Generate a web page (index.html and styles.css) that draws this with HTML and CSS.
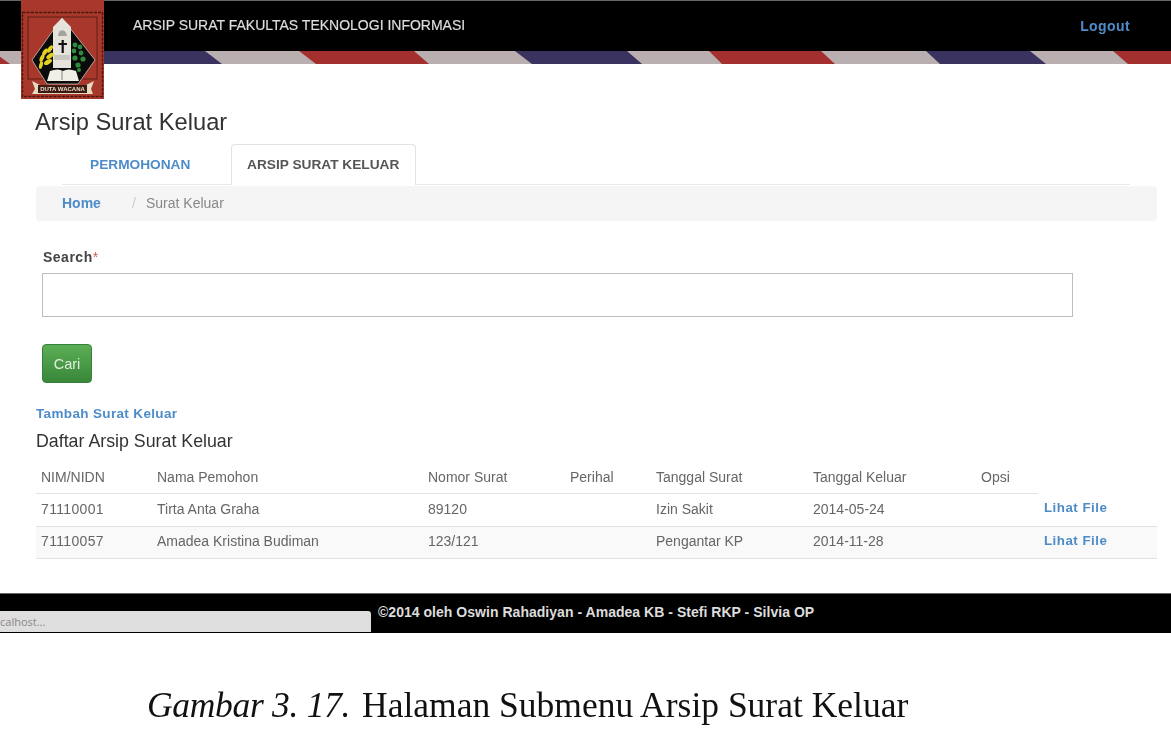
FILE: index.html
```html
<!DOCTYPE html>
<html lang="id">
<head>
<meta charset="utf-8">
<title>Arsip Surat Keluar</title>
<link rel="stylesheet" href="styles.css">
</head>
<body>
<div class="shot">
  <header class="masthead">
    <div class="topbar">
      <span class="brand">ARSIP SURAT FAKULTAS TEKNOLOGI INFORMASI</span>
      <a class="logout">Logout</a>
    </div>
    <svg class="stripes" viewBox="0 0 1171 13" preserveAspectRatio="none" aria-hidden="true">
      <rect width="1171" height="13" fill="#b9aeb0"/>
      <polygon points="-20,0 -8,0 10,13 -2,13" fill="#a3302e"/>
      <polygon points="90,0 205,0 222,13 104,13" fill="#3a3360"/>
      <polygon points="299,0 414,0 429,13 316,13" fill="#a3302e"/>
      <polygon points="515,0 627,0 642,13 532,13" fill="#3a3360"/>
      <polygon points="709,0 821,0 835,13 722,13" fill="#a3302e"/>
      <polygon points="926,0 1030,0 1046,13 940,13" fill="#3a3360"/>
      <polygon points="1113,0 1171,0 1171,13 1128,13" fill="#a3302e"/>
    </svg>
    <svg class="logo" viewBox="0 0 83 99" aria-label="Logo Duta Wacana">
      <rect width="83" height="99" fill="#a8382b"/>
      <rect x="1.5" y="12.5" width="80" height="84" fill="none" stroke="#4a1610" stroke-width="1.3" stroke-dasharray="3 1.2"/>
      <rect x="7" y="17" width="69" height="62" fill="none" stroke="#5a1d14" stroke-width=".9"/>
      <polygon points="41,18 74,60 57,84 26,84 11,60" fill="#0b0b0b" stroke="#d8d4cc" stroke-width=".7"/>
      <polygon points="41,18 50,27 50,68 32,68 32,27" fill="#e6e3dc"/>
      <path d="M37 36q1-6 3-5 1-2 3 0 2 0 3 5z" fill="#a3a3a0"/>
      <rect x="40.6" y="40" width="2.2" height="13" fill="#111"/>
      <rect x="37.5" y="43" width="8.4" height="2" fill="#111"/>
      <path d="M33 55h16v5H33z" fill="#c9c7c1"/>
      <path d="M18 70q2-16 13-27" fill="none" stroke="#1a1a0a" stroke-width=".8"/>
      <g fill="#e2d11f">
        <ellipse cx="29" cy="49" rx="2" ry="4.2" transform="rotate(35 29 49)"/>
        <ellipse cx="24" cy="52" rx="2" ry="4" transform="rotate(35 24 52)"/>
        <ellipse cx="29" cy="56" rx="2.2" ry="4.2" transform="rotate(55 29 56)"/>
        <ellipse cx="21" cy="58" rx="2" ry="4" transform="rotate(25 21 58)"/>
        <ellipse cx="27" cy="62" rx="2.2" ry="4.4" transform="rotate(60 27 62)"/>
        <ellipse cx="20" cy="65" rx="1.8" ry="4" transform="rotate(15 20 65)"/>
      </g>
      <g fill="#2e8a3d">
        <circle cx="54" cy="45" r="2.4"/><circle cx="59" cy="47" r="2.4"/><circle cx="53" cy="51" r="2.4"/>
        <circle cx="60" cy="53" r="2.4"/><circle cx="54" cy="58" r="2.6"/><circle cx="62" cy="59" r="2.6"/>
        <circle cx="57" cy="65" r="2.6"/><circle cx="58" cy="70" r="2"/>
      </g>
      <path d="M26 81l3-10q8-3 13 0q5-3 13 0l3 10z" fill="#f1eee7"/>
      <path d="M41 71v9" stroke="#555" stroke-width=".7"/>
      <path d="M11 81l8 4h46l8-4-3 8 2 5H11l3-5z" fill="#e5dcc0"/>
      <path d="M17 85h49v8H17z" fill="#3d1a12"/>
      <text x="41.5" y="91.4" class="logo-text" text-anchor="middle">DUTA WACANA</text>
    </svg>
  </header>

  <main class="content">
    <h1 class="page-title">Arsip Surat Keluar</h1>
    <nav class="tabs">
      <a class="tab">PERMOHONAN</a>
      <a class="tab tab-active">ARSIP SURAT KELUAR</a>
    </nav>
    <div class="crumbs">
      <a class="crumb-home">Home</a>
      <span class="crumb-sep">/</span>
      <span class="crumb-here">Surat Keluar</span>
    </div>
    <form class="search">
      <label class="search-label">Search<span class="req">*</span></label>
      <input class="search-input" type="text">
      <button class="btn-cari" type="button">Cari</button>
    </form>
    <a class="add-link">Tambah Surat Keluar</a>
    <h2 class="list-title">Daftar Arsip Surat Keluar</h2>
    <table class="grid">
      <thead>
        <tr>
          <th class="c-nim">NIM/NIDN</th>
          <th class="c-nama">Nama Pemohon</th>
          <th class="c-nomor">Nomor Surat</th>
          <th class="c-perihal">Perihal</th>
          <th class="c-tgl">Tanggal Surat</th>
          <th class="c-keluar">Tanggal Keluar</th>
          <th class="c-opsi">Opsi</th>
          <th class="c-file-head"></th>
        </tr>
      </thead>
      <tbody>
        <tr>
          <td class="num">71110001</td><td>Tirta Anta Graha</td><td>89120</td><td></td><td>Izin Sakit</td><td>2014-05-24</td><td></td><td><a class="file-link">Lihat File</a></td>
        </tr>
        <tr class="alt">
          <td class="num">71110057</td><td>Amadea Kristina Budiman</td><td>123/121</td><td></td><td>Pengantar KP</td><td>2014-11-28</td><td></td><td><a class="file-link">Lihat File</a></td>
        </tr>
      </tbody>
    </table>
  </main>

  <footer class="foot">
    <span class="status">calhost...</span>
    <span class="credit">©2014 oleh Oswin Rahadiyan - Amadea KB - Stefi RKP - Silvia OP</span>
  </footer>

  <p class="caption"><em class="caption-lead">Gambar 3. 17.</em> Halaman Submenu Arsip Surat Keluar</p>
</div>
</body>
</html>
```
FILE: styles.css
```css
* { box-sizing: border-box; }
html, body { margin: 0; padding: 0; background: #fff; }
body { font-family: "Liberation Sans", Arial, sans-serif; color: #555; overflow: hidden; }
.shot { width: 1171px; height: 748px; overflow: hidden; filter: blur(0.45px); }

.masthead { position: relative; }
.topbar { height: 51px; background: #000; border-top: 1px solid #666; display: flex; justify-content: space-between; padding: 17px 41px 0 133px; }
.brand { color: #ddd; font-size: 14px; line-height: 15px; -webkit-text-stroke: .2px #ddd; }
.logout { color: #4d8cc9; font-size: 14px; font-weight: 700; line-height: 16px; letter-spacing: .4px; }
.stripes { display: block; width: 100%; height: 13px; }
.logo { position: absolute; left: 21px; top: 0; width: 83px; height: 99px; }
.logo-text { font-family: "Liberation Sans", Arial, sans-serif; font-size: 6px; font-weight: 700; fill: #e8e0c8; }

.content { padding: 45px 14px 0 36px; height: 529px; }
.page-title { margin: 0 0 0 -1px; font-size: 23.7px; line-height: 27px; font-weight: 400; color: #333; }
.tabs { display: flex; margin: 8px 27px 0 26px; height: 41px; border-bottom: 1px solid #e8e8e8; font-size: 13.7px; font-weight: 700; }
.tab { padding: 13px 16px 0 28px; color: #4d8cc9; width: 169px; line-height: 16px; }
.tab-active { width: 185px; height: 41px; padding: 12px 0 0 15px; color: #555; background: #fff; border: 1px solid #e3e3e3; border-bottom: 0; border-radius: 4px 4px 0 0; }
.crumbs { height: 35px; margin-top: 1px; background: #f5f5f5; border-radius: 4px; display: flex; align-items: center; padding: 0 0 2px 26px; font-size: 14px; }
.crumb-home { color: #4d8cc9; font-weight: 700; width: 70px; }
.crumb-sep { color: #ccc; width: 14px; }
.crumb-here { color: #888; }

.search { display: flex; flex-direction: column; align-items: flex-start; }
.search-label { margin: 28px 0 0 7px; font-size: 14px; font-weight: 700; line-height: 16px; color: #444; letter-spacing: .5px; }
.req { color: #c9604f; font-weight: 400; }
.search-input { width: 1031px; height: 44px; margin: 8px 0 0 6px; border: 1px solid #bdbdbd; background: #fff; }
.btn-cari { width: 50px; height: 39px; margin: 27px 0 0 6px; padding: 0; color: #dfeedd; font: 400 14.5px "Liberation Sans", Arial, sans-serif; background: linear-gradient(#5cae55, #39873a); border: 1px solid #37803a; border-radius: 4px; }

.add-link { display: block; margin-top: 23px; font-size: 13.5px; line-height: 15px; font-weight: 700; color: #4d8cc9; letter-spacing: .35px; }
.list-title { margin: 10px 0 0; font-size: 17.8px; line-height: 20px; font-weight: 400; color: #333; }

.grid { width: 1121px; margin-top: 10px; border-collapse: collapse; table-layout: fixed; font-size: 14px; color: #666; }
.grid th { height: 32px; padding: 0 0 0 5px; text-align: left; font-weight: 400; border-bottom: 1px solid #e2e2e2; }
.grid th.c-file-head { border-bottom: 0; }
.grid td { height: 33px; padding: 0 0 2px 5px; border-bottom: 1px solid #e2e2e2; }
.grid .alt td { height: 32px; padding-bottom: 2px; background: #f9f9f9; }
.grid .num { letter-spacing: .35px; }
.c-nim { width: 116px; }
.c-nama { width: 271px; }
.c-nomor { width: 142px; }
.c-perihal { width: 86px; }
.c-tgl { width: 157px; }
.c-keluar { width: 168px; }
.c-opsi { width: 62px; }
.file-link { display: block; margin: -1px 0 0 1px; color: #4d8cc9; font-size: 13.3px; font-weight: 700; letter-spacing: .5px; }

.foot { position: relative; height: 40px; background: #000; border-top: 1px solid #666; padding: 11px 0 0 378px; }
.credit { display: block; color: #ddd; font-size: 14px; line-height: 15px; font-weight: 700; letter-spacing: .03px; }
.status { position: absolute; left: 0; bottom: 1px; width: 371px; height: 21px; padding: 3px 0 0 0; background: #dedede; border-radius: 0 3px 0 0; color: #888; font: 11px/15px "Open Sans", "Liberation Sans", sans-serif; }

.caption { margin: 52px 0 0 147px; font-family: "Liberation Serif", "Times New Roman", serif; font-size: 35.5px; line-height: 40px; color: #111; white-space: nowrap; }
.caption-lead { letter-spacing: -.3px; margin-right: 3px; }
```
